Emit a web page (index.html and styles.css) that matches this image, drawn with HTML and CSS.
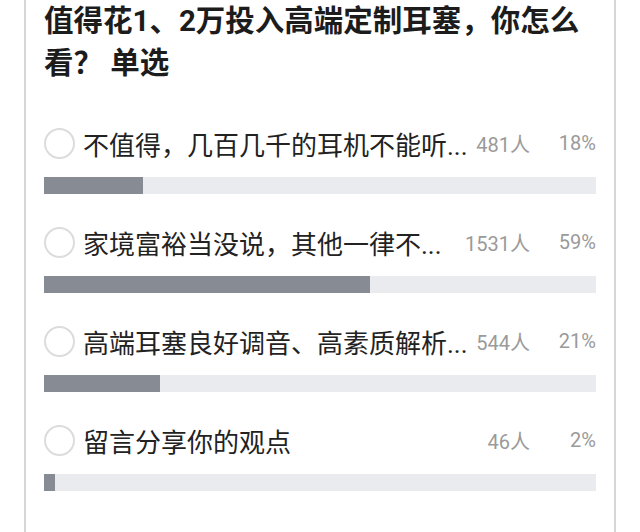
FILE: index.html
```html
<!DOCTYPE html>
<html lang="zh-CN">
<head>
    <meta charset="UTF-8">
    <meta name="viewport" content="width=device-width, initial-scale=1.0">
    <title>投票</title>
    <link rel="stylesheet" href="styles.css">
</head>
<body>
    <div class="card">
        <h1 class="question">值得花1、2万投入高端定制耳塞，你怎么看？ 单选</h1>

        <!-- 选项列表 -->
        <div class="options">
            <div class="option">
                <div class="row">
                    <span class="radio"></span>
                    <span class="label">不值得，几百几千的耳机不能听...</span>
                    <span class="count">481人</span>
                    <span class="pct">18%</span>
                </div>
                <div class="bar"><div class="fill" style="width: 18%"></div></div>
            </div>

            <div class="option">
                <div class="row">
                    <span class="radio"></span>
                    <span class="label">家境富裕当没说，其他一律不...</span>
                    <span class="count">1531人</span>
                    <span class="pct">59%</span>
                </div>
                <div class="bar"><div class="fill" style="width: 59%"></div></div>
            </div>

            <div class="option">
                <div class="row">
                    <span class="radio"></span>
                    <span class="label">高端耳塞良好调音、高素质解析...</span>
                    <span class="count">544人</span>
                    <span class="pct">21%</span>
                </div>
                <div class="bar"><div class="fill" style="width: 21%"></div></div>
            </div>

            <div class="option">
                <div class="row">
                    <span class="radio"></span>
                    <span class="label">留言分享你的观点</span>
                    <span class="count">46人</span>
                    <span class="pct">2%</span>
                </div>
                <div class="bar"><div class="fill" style="width: 2%"></div></div>
            </div>
        </div>
    </div>
</body>
</html>
```

FILE: styles.css
```css
body {
    margin: 0;
    background: #fff;
    font-family: Roboto, "Noto Sans CJK SC", sans-serif;
    color: #222;
}
.card {
    margin-left: 24px;
    width: 552px;
    min-height: 532px;
    padding: 0 18px;
    border-left: 2px solid #d6d6d6;
    border-right: 2px solid #d6d6d6;
}
.question {
    margin: 0;
    font-size: 29.5px;
    line-height: 42px;
    font-weight: bold;
    color: #1c1c1c;
}
.options {
    margin-top: 41px;
    display: flex;
    flex-direction: column;
    gap: 30px;
}
.option {
    display: flex;
    flex-direction: column;
    gap: 16px;
}
.row {
    display: flex;
    align-items: center;
    height: 36px;
}
.radio {
    width: 27px;
    height: 27px;
    border: 2px solid #dcdcdc;
    border-radius: 50%;
    flex-shrink: 0;
}
.label {
    flex: 1;
    min-width: 0;
    margin-left: 8px;
    font-size: 26px;
    white-space: nowrap;
}
.count, .pct {
    flex-shrink: 0;
    font-size: 20px;
    color: #9a9a9a;
    text-align: right;
    white-space: nowrap;
}
.count {
    width: 80px;
}
.pct {
    width: 66px;
}
.bar {
    height: 17px;
    background: #e9ebee;
}
.fill {
    height: 100%;
    background: #878b93;
}
```
